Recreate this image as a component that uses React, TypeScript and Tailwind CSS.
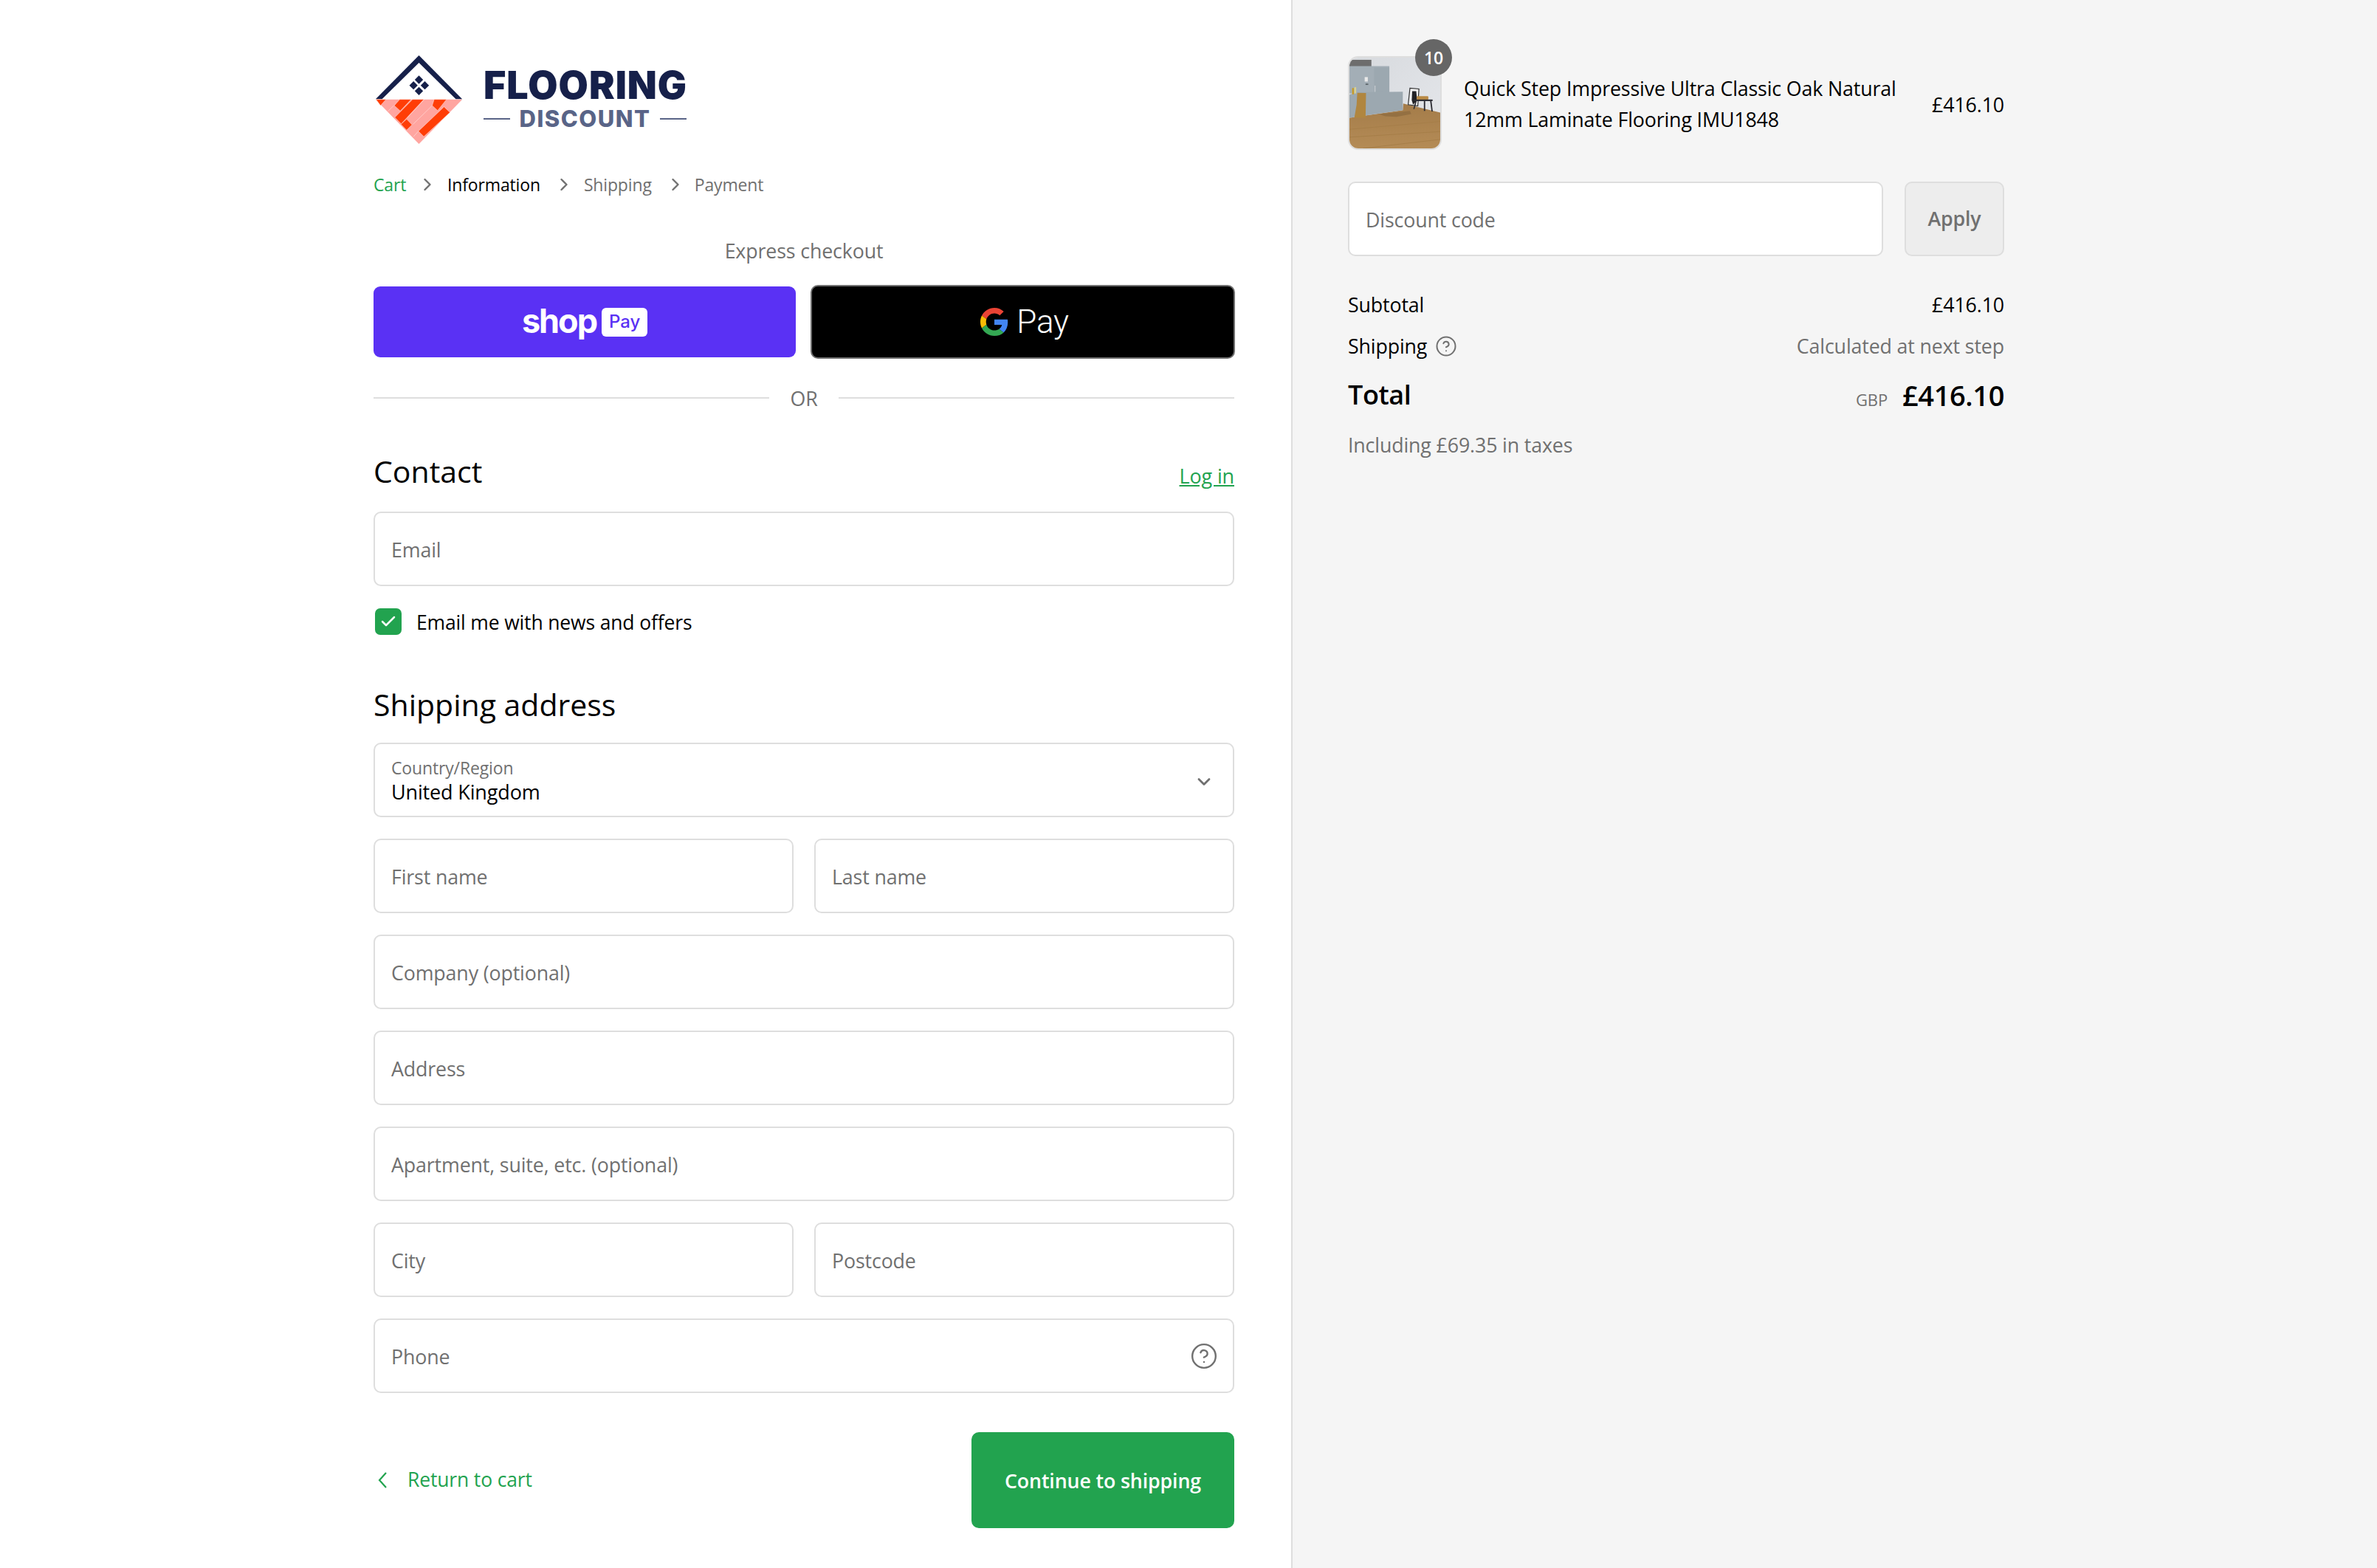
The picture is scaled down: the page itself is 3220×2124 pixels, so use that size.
import { Check, ChevronDown, ChevronRight, CircleHelp } from "lucide-react";

const base = "font-['Open_Sans',sans-serif] tracking-[-0.15px]";

function Field({ placeholder, right }: { placeholder: string; right?: boolean }) {
  return (
    <div className="relative h-[101px] min-w-0 flex-1">
      <input
        type="text"
        placeholder={placeholder}
        className="h-full w-full rounded-[10px] border-2 border-[#dedede] bg-white px-[22px] pt-[2px] text-[26.8px] text-black outline-none placeholder:text-[#707070]"
      />
      {right && (
        <CircleHelp
          size={38}
          strokeWidth={1.5}
          className="absolute right-[22px] top-[32px] text-[#707070]"
        />
      )}
    </div>
  );
}

function Logo() {
  const red = "#ff3d06";
  const pink = "#ffa5a0";
  return (
    <div className="flex h-[121px] items-start">
      <svg viewBox="0 0 400 390" className="-ml-[6px] -mt-[5px] h-[130px] w-[135px] shrink-0">
        <polygon points="200,18 376,196 350,196 200,48 50,196 24,196" fill="#16204a" />
        <polygon points="200,100 217,117 200,134 183,117" fill="#16204a" />
        <polygon points="178,123 195,140 178,157 161,140" fill="#16204a" />
        <polygon points="224,123 241,140 224,157 207,140" fill="#16204a" />
        <polygon points="200,146 217,163 200,180 183,163" fill="#16204a" />
        <polygon points="24,197 376,197 200,378" fill={pink} />
        <g stroke="#ffffff" strokeWidth="1.2">
          <polygon points="26,197 66,197 44,222" fill={red} />
          <polygon points="122,197 168,197 124,244 100,222" fill={red} />
          <polygon points="174,197 220,197 128,296 102,270" fill={red} />
          <polygon points="150,277 172,300 150,322 127,298" fill={red} />
          <polygon points="262,197 312,197 276,242 254,222" fill={red} />
          <polygon points="302,227 326,250 220,348 198,326" fill={red} />
          <line x1="74" y1="245" x2="98" y2="222" />
          <line x1="222" y1="197" x2="152" y2="272" />
          <line x1="254" y1="222" x2="176" y2="298" />
          <line x1="198" y1="326" x2="178" y2="348" />
        </g>
      </svg>
      <div className="ml-[20px] w-[275px] font-['Inter',sans-serif]">
        <div className="mt-[13px] whitespace-nowrap text-[52px] font-black leading-[58px] tracking-[1px] text-[#16204a]">
          FLOORING
        </div>
        <div className="mt-[-2px] flex items-center justify-between">
          <span className="h-[2px] w-[36px] bg-[#596487]" />
          <span className="text-[31px] font-extrabold leading-[36px] tracking-[1.5px] text-[#596487]">
            DISCOUNT
          </span>
          <span className="h-[2px] w-[36px] bg-[#596487]" />
        </div>
      </div>
    </div>
  );
}

function GoogleG() {
  return (
    <svg viewBox="0 0 48 48" className="h-[38px] w-[38px]">
      <path fill="#EA4335" d="M24 9.5c3.54 0 6.71 1.22 9.21 3.6l6.85-6.85C35.9 2.38 30.47 0 24 0 14.62 0 6.51 5.38 2.56 13.22l7.98 6.19C12.43 13.72 17.74 9.5 24 9.5z" />
      <path fill="#4285F4" d="M46.98 24.55c0-1.57-.15-3.09-.38-4.55H24v9.02h12.94c-.58 2.96-2.26 5.48-4.78 7.18l7.73 6c4.51-4.18 7.09-10.36 7.09-17.65z" />
      <path fill="#FBBC05" d="M10.53 28.59c-.48-1.45-.76-2.99-.76-4.59s.27-3.14.76-4.59l-7.98-6.19C.92 16.46 0 20.12 0 24c0 3.88.92 7.54 2.56 10.78l7.97-6.19z" />
      <path fill="#34A853" d="M24 48c6.48 0 11.93-2.13 15.89-5.81l-7.73-6c-2.15 1.45-4.92 2.3-8.16 2.3-6.26 0-11.57-4.22-13.47-9.91l-7.98 6.19C6.51 42.62 14.62 48 24 48z" />
    </svg>
  );
}

function ProductPhoto() {
  return (
    <svg viewBox="0 0 405 405" className="h-full w-full">
      <defs>
        <filter id="soft">
          <feGaussianBlur stdDeviation="2.4" />
        </filter>
        <linearGradient id="floor" x1="0" y1="0" x2="0" y2="1">
          <stop offset="0" stopColor="#a47c4a" />
          <stop offset="1" stopColor="#b58c56" />
        </linearGradient>
        <linearGradient id="wall" x1="0" y1="0" x2="1" y2="1">
          <stop offset="0" stopColor="#d6d9dd" />
          <stop offset="1" stopColor="#e6e8ec" />
        </linearGradient>
      </defs>
      <g filter="url(#soft)">
        <rect x="-10" y="-10" width="425" height="425" fill="url(#wall)" />
        <rect x="-10" y="10" width="108" height="30" fill="#6d6d6d" />
        <rect x="-10" y="38" width="188" height="122" fill="#a3aeb6" />
        <rect x="110" y="44" width="68" height="112" fill="#9ca8b0" />
        <polygon points="-10,270 238,235 240,205 415,248 415,415 -10,415" fill="url(#floor)" />
        <polygon points="-10,168 36,155 238,152 238,235 -10,270" fill="#9ca8b0" />
        <rect x="68" y="87" width="14" height="20" fill="#e8e8e8" />
        <rect x="72" y="116" width="12" height="6" fill="#5d666c" />
        <rect x="112" y="125" width="4" height="28" fill="#c5cbd0" />
        <rect x="12" y="136" width="8" height="28" fill="#c79a25" />
        <rect x="22" y="132" width="8" height="28" fill="#d9d28f" />
        <polygon points="35,157 74,158 72,268 22,268 32,210" fill="#b08640" />
        <polygon points="262,210 270,136 310,140 305,216" fill="#f1f1f1" stroke="#303030" strokeWidth="4" />
        <polygon points="280,150 298,150 302,190 284,210 278,190" fill="#222226" />
        <rect x="300" y="172" width="52" height="16" rx="4" fill="#b98a45" />
        <rect x="285" y="187" width="86" height="7" fill="#2b2b30" />
        <polygon points="294,194 300,194 290,230 285,230" fill="#2b2b30" />
        <polygon points="360,194 366,194 372,240 366,240" fill="#2b2b30" />
        <rect x="332" y="194" width="6" height="44" fill="#2b2b30" />
        <polygon points="130,252 270,238 276,252 210,264 160,262" fill="#947043" />
        <path d="M0 320 L405 285 M0 355 L405 330 M60 405 L405 365" stroke="#a57d48" strokeWidth="3" fill="none" />
      </g>
    </svg>
  );
}

export default function App() {
  return (
    <div className={`flex h-[2124px] w-full overflow-hidden bg-white text-black ${base}`}>
      <main className="w-[1749px] shrink-0 pl-[506px] pr-[77px] pt-[74px]">
        <Logo />

        <nav className="mt-[37px] flex h-[36px] items-center text-[23px]">
          <span className="w-[44px] text-[#22a34f]">Cart</span>
          <ChevronRight size={28} strokeWidth={2} className="ml-[15px] text-[#707070]" />
          <span className="ml-[13px] font-medium">Information</span>
          <ChevronRight size={28} strokeWidth={2} className="ml-[18px] text-[#707070]" />
          <span className="ml-[13px] text-[#707070]">Shipping</span>
          <ChevronRight size={28} strokeWidth={2} className="ml-[18px] text-[#707070]" />
          <span className="ml-[12px] text-[#707070]">Payment</span>
        </nav>

        <p className="mt-[52px] h-[40px] text-center text-[26.8px] leading-[40px] text-[#707070]">
          Express checkout
        </p>

        <div className="-mr-[1px] mt-[26px] flex h-[100px] items-center gap-[20px]">
          <button className="flex h-[96px] w-[572px] items-center justify-center rounded-[9px] bg-[#5a31f4]">
            <span className="-mt-[4px] font-['Inter',sans-serif] text-[45px] font-bold leading-[45px] tracking-[-2px] text-white">
              shop
            </span>
            <span className="ml-[7px] flex h-[39px] w-[62px] items-center justify-center rounded-[6px] bg-white font-['Inter',sans-serif] text-[24px] font-medium tracking-normal text-[#5a31f4]">
              Pay
            </span>
          </button>
          <button className="flex h-[100px] flex-1 items-center justify-center rounded-[10px] border-2 border-[#6f6f6f] bg-black pl-[5px]">
            <GoogleG />
            <span className="ml-[11px] font-['Roboto',sans-serif] text-[44px] font-light leading-[44px] text-white">
              Pay
            </span>
          </button>
        </div>

        <div className="mt-[33px] flex h-[40px] items-center">
          <span className="h-[2px] flex-1 bg-[#dedede]" />
          <span className="w-[94px] pt-[2px] text-center text-[26.8px] text-[#707070]">OR</span>
          <span className="h-[2px] flex-1 bg-[#dedede]" />
        </div>

        <div className="mt-[53px] flex h-[56px] items-center justify-between">
          <h2 className="-mt-[2px] text-[41px] font-medium tracking-normal">Contact</h2>
          <a className="mt-[10px] text-[27px] text-[#22a34f] underline">Log in</a>
        </div>

        <div className="mt-[25px] flex">
          <Field placeholder="Email" />
        </div>

        <label className="mt-[30px] flex h-[36px] items-center">
          <span className="ml-[2px] flex h-[36px] w-[36px] items-center justify-center rounded-[7px] bg-[#22a34f]">
            <Check size={24} strokeWidth={2.5} className="text-white" />
          </span>
          <span className="ml-[20px] mt-[3px] text-[26.5px]">Email me with news and offers</span>
        </label>

        <h2 className="mt-[67px] flex h-[56px] items-center text-[41px] font-medium tracking-normal">Shipping address</h2>

        <div className="mt-[23px] flex flex-col gap-[29px]">
          <div className="relative h-[101px] rounded-[10px] border-2 border-[#dedede] bg-white px-[22px] pt-[17px]">
            <div className="text-[23px] leading-[30px] text-[#707070]">Country/Region</div>
            <div className="text-[27px] leading-[36px]">United Kingdom</div>
            <ChevronDown size={28} strokeWidth={2.4} className="absolute right-[25px] top-[37px] text-[#707070]" />
          </div>
          <div className="flex gap-[28px]">
            <Field placeholder="First name" />
            <Field placeholder="Last name" />
          </div>
          <div className="flex">
            <Field placeholder="Company (optional)" />
          </div>
          <div className="flex">
            <Field placeholder="Address" />
          </div>
          <div className="flex">
            <Field placeholder="Apartment, suite, etc. (optional)" />
          </div>
          <div className="flex gap-[28px]">
            <Field placeholder="City" />
            <Field placeholder="Postcode" />
          </div>
          <div className="flex">
            <Field placeholder="Phone" right />
          </div>
        </div>

        <div className="mt-[53px] flex h-[130px] items-center justify-between">
          <a className="flex items-center text-[26.5px] text-[#22a34f]">
            <svg viewBox="0 0 14 24" className="ml-[5px] h-[24px] w-[14px]" fill="none" stroke="currentColor" strokeWidth="2.2">
              <path d="M12 2 L3 12 L12 22" />
            </svg>
            <span className="ml-[27px]">Return to cart</span>
          </a>
          <button className="h-[130px] w-[356px] rounded-[10px] bg-[#22a34f] pt-[2px] text-[26.8px] font-semibold text-white">
            Continue to shipping
          </button>
        </div>
      </main>

      <aside className="flex-1 border-l-2 border-[#dedede] bg-[#f5f5f5] pl-[75px] pt-[76px]">
        <div className="w-[889px]">
          <div className="flex items-center">
            <div className="relative h-[127px] w-[127px] shrink-0 rounded-[14px] border-2 border-[#dedede]">
              <div className="h-full w-full overflow-hidden rounded-[12px]">
                <ProductPhoto />
              </div>
              <span className="absolute -right-[16px] -top-[25px] flex h-[50px] w-[50px] items-center justify-center rounded-full bg-[#666666] text-[23px] font-semibold text-white">
                10
              </span>
            </div>
            <p className="ml-[30px] mt-[2px] w-[600px] text-[26.8px] leading-[42px]">
              Quick Step Impressive Ultra Classic Oak Natural 12mm Laminate Flooring IMU1848
            </p>
            <span className="ml-auto mt-[5px] text-[26.8px]">£416.10</span>
          </div>

          <div className="mt-[43px] flex h-[101px] gap-[29px]">
            <input
              type="text"
              placeholder="Discount code"
              className="h-full w-[725px] rounded-[10px] border-2 border-[#dedede] bg-white px-[22px] pt-[2px] text-[26.8px] outline-none placeholder:text-[#707070]"
            />
            <button className="h-full flex-1 rounded-[10px] border-2 border-[#dedede] bg-[#ededed] text-[26.8px] font-semibold text-[#707070]">
              Apply
            </button>
          </div>

          <div className="mt-[46px] flex h-[40px] items-center justify-between text-[26.8px]">
            <span>Subtotal</span>
            <span>£416.10</span>
          </div>
          <div className="mt-[16px] flex h-[40px] items-center justify-between text-[26.8px]">
            <span className="flex items-center">
              Shipping
              <CircleHelp size={30} strokeWidth={1.6} className="ml-[11px] text-[#707070]" />
            </span>
            <span className="text-[#707070]">Calculated at next step</span>
          </div>
          <div className="mt-[21px] flex h-[50px] items-center justify-between">
            <span className="text-[36px] font-semibold tracking-[-0.4px]">Total</span>
            <span className="flex items-baseline">
              <span className="text-[22px] text-[#707070]">GBP</span>
              <span className="ml-[20px] text-[38px] font-semibold tracking-[-0.4px]">£416.10</span>
            </span>
          </div>
          <p className="mt-[23px] flex h-[40px] items-center text-[26.8px] text-[#707070]">Including £69.35 in taxes</p>
        </div>
      </aside>
    </div>
  );
}
